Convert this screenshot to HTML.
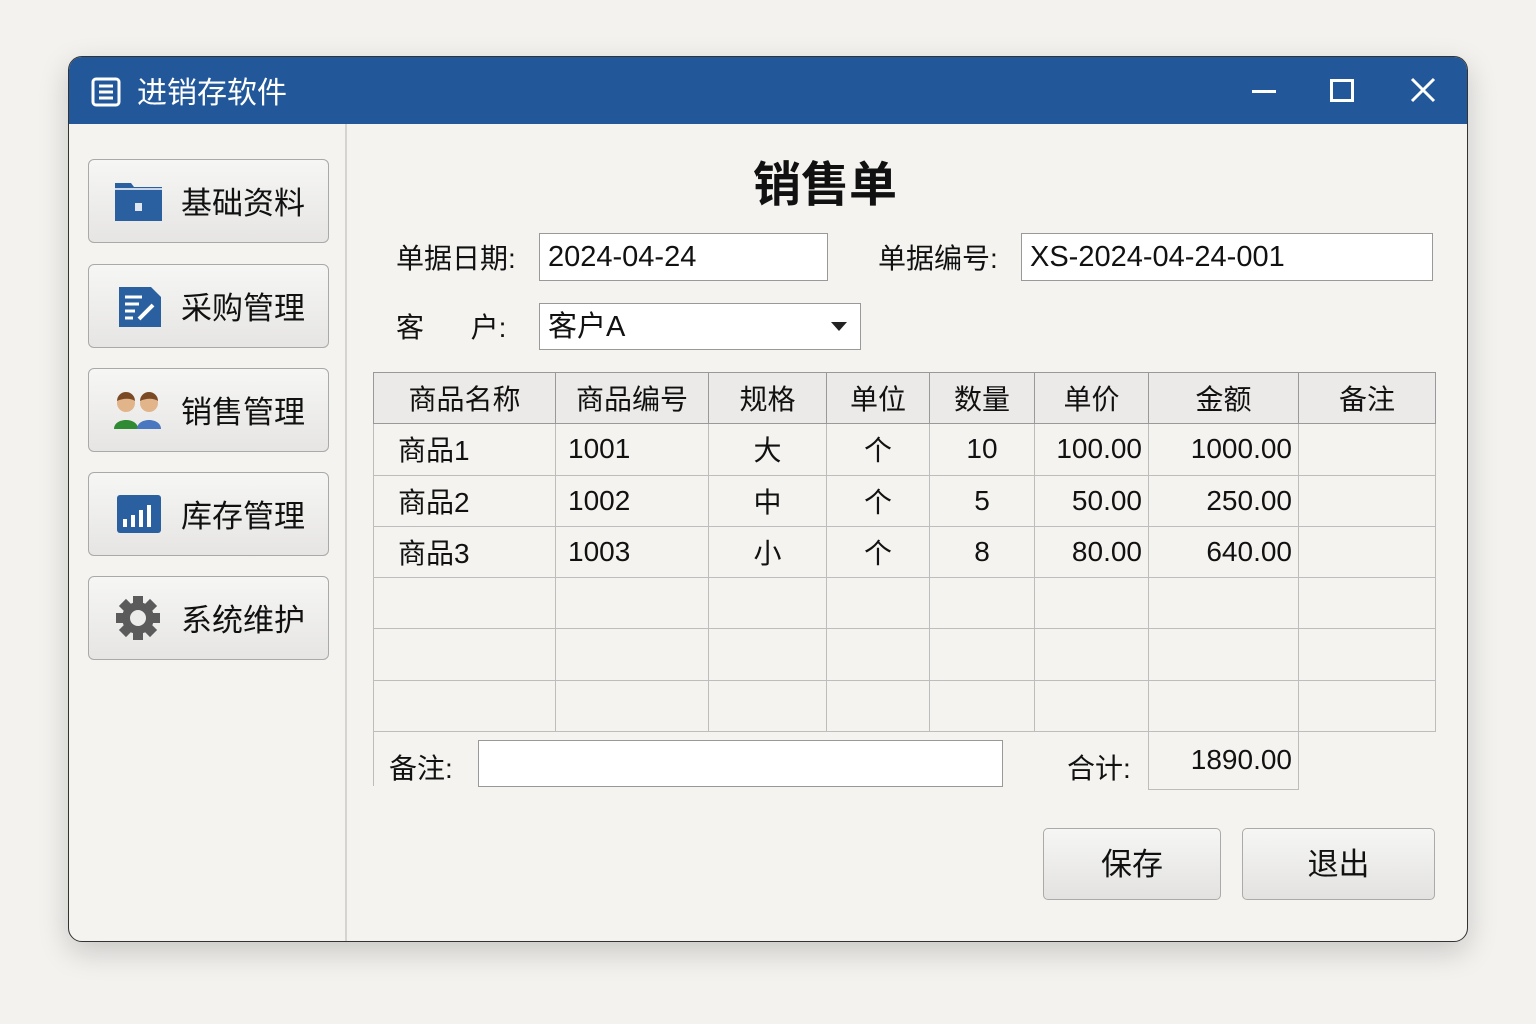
<!DOCTYPE html>
<html><head><meta charset="utf-8"><style>
*{box-sizing:border-box;margin:0;padding:0}
body{width:1536px;height:1024px;background:#f3f2ef;font-family:"Liberation Sans","Noto Sans CJK SC",sans-serif;color:#111;position:relative;overflow:hidden}
.win{position:absolute;left:68px;top:56px;width:1400px;height:886px;border:1.5px solid #333;border-radius:14px;background:#f4f3f0;overflow:hidden;box-shadow:0 10px 30px rgba(0,0,0,.18)}
.tb{position:absolute;left:0;top:0;width:100%;height:67px;background:#22579a;color:#fff}
.abs{position:absolute}
.side{position:absolute;left:276px;top:67px;width:2px;height:820px;background:#d6d4d0}
.btn{position:absolute;left:19px;width:241px;height:84px;border:1.5px solid #a9a9a9;border-radius:6px;background:linear-gradient(#f6f6f5,#e6e5e3);font-size:31px}
.btn span{position:absolute;left:92px;top:18px}
.lbl{position:absolute;font-size:28px}
.inp{position:absolute;background:#fff;border:1.5px solid #999;font-size:29px;padding-left:8px;line-height:46px}
table{position:absolute;left:304px;top:315px;border-collapse:collapse;font-size:28px}
td{border:1px solid #bdbdbd;height:51.3px;padding:0 6px}
tr.h td{background:#ebeae8;text-align:center;border-color:#999}
.c{text-align:center}.r{text-align:right}
.pb{position:absolute;border:1.5px solid #aaa;border-radius:5px;background:linear-gradient(#f6f6f5,#e3e2e0);font-size:31px;text-align:center;line-height:68px}
</style></head><body>
<div class="win">
 <div class="tb">
  <svg class="abs" style="left:22px;top:20px" width="30" height="30" viewBox="0 0 30 30"><rect x="2" y="2" width="26" height="26" rx="3" fill="none" stroke="#fff" stroke-width="3"/><path d="M8 9h14M8 15h14M8 21h14" stroke="#fff" stroke-width="3"/></svg>
  <div class="abs" style="left:68px;top:11px;font-size:30px">进销存软件</div>
  <div class="abs" style="left:1183px;top:33px;width:24px;height:3px;background:#fff"></div>
  <div class="abs" style="left:1261px;top:22px;width:24px;height:23px;border:3px solid #fff"></div>
  <svg class="abs" style="left:1341px;top:20px" width="26" height="26"><path d="M2 2L24 24M24 2L2 24" stroke="#fff" stroke-width="3"/></svg>
 </div>
 <div class="side"></div>
 <div class="btn" style="top:102px"><svg class="abs" style="left:26px;top:21px" width="47" height="40"><path d="M0 2h16l3 4h28v34H0z" fill="#2a5fa0"/><path d="M0 8h47" stroke="#fff" stroke-width="1.5"/><rect x="20" y="22" width="7" height="8" fill="#dfe6f0"/></svg><span>基础资料</span></div>
 <div class="btn" style="top:207px"><svg class="abs" style="left:30px;top:22px" width="42" height="40"><path d="M0 0h32l10 10v30H0z" fill="#2a5fa0"/><path d="M6 10h17M6 17h14M6 24h10M6 31h8" stroke="#fff" stroke-width="3"/><path d="M20 32l14-14" stroke="#fff" stroke-width="4"/></svg><span>采购管理</span></div>
 <div class="btn" style="top:311px"><svg class="abs" style="left:24px;top:20px" width="50" height="42"><path d="M1 40c0-12 24-12 24 0z" fill="#2f8a34"/><circle cx="13" cy="14" r="9" fill="#e2b48a"/><path d="M4 12a9 9 0 0 1 18 0c-4-3-12-3-18 0z" fill="#7a4a26"/><path d="M24 40c0-12 24-12 24 0z" fill="#4a78c0"/><circle cx="36" cy="14" r="9" fill="#e2b48a"/><path d="M27 12a9 9 0 0 1 18 0c-4-3-12-3-18 0z" fill="#7a4a26"/></svg><span>销售管理</span></div>
 <div class="btn" style="top:415px"><svg class="abs" style="left:28px;top:22px" width="44" height="40"><rect width="44" height="38" rx="3" fill="#2a5fa0"/><path d="M8 32v-8M16 32v-12M24 32v-17M32 32v-22" stroke="#fff" stroke-width="4"/></svg><span>库存管理</span></div>
 <div class="btn" style="top:519px"><svg class="abs" style="left:26px;top:18px" width="46" height="46" viewBox="-23 -23 46 46"><g fill="#5b5b5b"><circle r="16"/><g id="t"><rect x="-5" y="-22" width="10" height="10"/></g><use href="#t" transform="rotate(45)"/><use href="#t" transform="rotate(90)"/><use href="#t" transform="rotate(135)"/><use href="#t" transform="rotate(180)"/><use href="#t" transform="rotate(225)"/><use href="#t" transform="rotate(270)"/><use href="#t" transform="rotate(315)"/></g><circle r="8" fill="#ececea"/></svg><span>系统维护</span></div>

 <div class="abs" style="left:684px;top:88px;font-size:48px;font-weight:bold">销售单</div>
 <div class="lbl" style="left:327px;top:180px">单据日期:</div>
 <div class="inp" style="left:470px;top:176px;width:289px;height:48px">2024-04-24</div>
 <div class="lbl" style="left:809px;top:180px">单据编号:</div>
 <div class="inp" style="left:952px;top:176px;width:412px;height:48px">XS-2024-04-24-001</div>
 <div class="lbl" style="left:327px;top:249px">客&nbsp;&nbsp;&nbsp;&nbsp;&nbsp;&nbsp;户:</div>
 <div class="inp" style="left:470px;top:246px;width:322px;height:47px">客户A<svg class="abs" style="left:291px;top:18px" width="16" height="10"><path d="M0 0h16L8 9z" fill="#222"/></svg></div>

 <table>
  <colgroup><col style="width:182px"><col style="width:153px"><col style="width:118px"><col style="width:103px"><col style="width:105px"><col style="width:114px"><col style="width:150px"><col style="width:137px"></colgroup>
  <tr class="h"><td>商品名称</td><td>商品编号</td><td>规格</td><td>单位</td><td>数量</td><td>单价</td><td>金额</td><td>备注</td></tr>
  <tr><td style="padding-left:24px">商品1</td><td style="padding-left:12px">1001</td><td class="c">大</td><td class="c">个</td><td class="c">10</td><td class="r">100.00</td><td class="r">1000.00</td><td></td></tr>
  <tr><td style="padding-left:24px">商品2</td><td style="padding-left:12px">1002</td><td class="c">中</td><td class="c">个</td><td class="c">5</td><td class="r">50.00</td><td class="r">250.00</td><td></td></tr>
  <tr><td style="padding-left:24px">商品3</td><td style="padding-left:12px">1003</td><td class="c">小</td><td class="c">个</td><td class="c">8</td><td class="r">80.00</td><td class="r">640.00</td><td></td></tr>
  <tr><td></td><td></td><td></td><td></td><td></td><td></td><td></td><td></td></tr>
  <tr><td></td><td></td><td></td><td></td><td></td><td></td><td></td><td></td></tr>
  <tr><td></td><td></td><td></td><td></td><td></td><td></td><td></td><td></td></tr>
 </table>
 <div class="abs" style="left:304px;top:675px;width:1px;height:54px;background:#bdbdbd"></div>
 <div class="lbl" style="left:320px;top:690px">备注:</div>
 <div class="inp" style="left:409px;top:683px;width:525px;height:47px"></div>
 <div class="lbl" style="left:998px;top:690px">合计:</div>
 <div class="abs" style="left:1079px;top:675px;width:151px;height:58px;border:1px solid #bdbdbd;border-top:none;font-size:28px;text-align:right;padding-right:6px;line-height:56px">1890.00</div>
 <div class="pb" style="left:974px;top:771px;width:178px;height:72px;line-height:72px">保存</div>
 <div class="pb" style="left:1173px;top:771px;width:193px;height:72px;line-height:72px">退出</div>
</div>
</body></html>
